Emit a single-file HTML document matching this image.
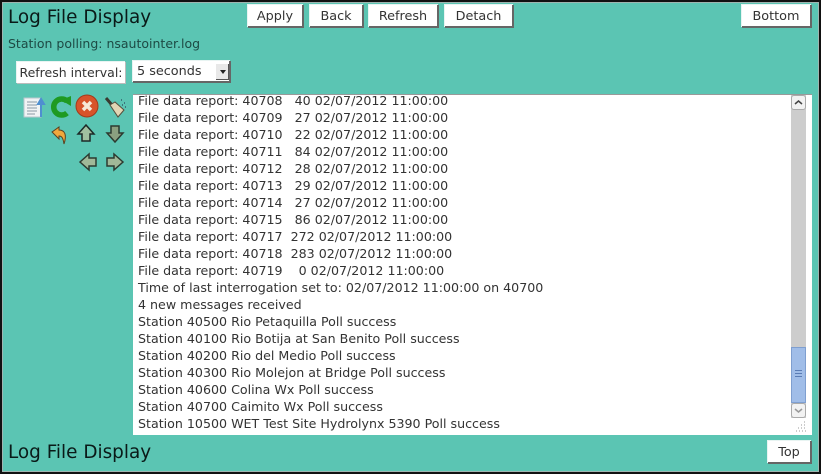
<!DOCTYPE html>
<html><head><meta charset="utf-8"><style>
html,body{margin:0;padding:0;width:821px;height:474px;overflow:hidden;background:#5bc5b3}
body{position:relative;font-family:"DejaVu Sans",sans-serif;color:#333}
.wrap{position:absolute;left:0;top:0;width:821px;height:474px;filter:blur(.35px)}
.frame{position:absolute;left:0;top:0;width:821px;height:474px;box-sizing:border-box;border:2px solid #111;box-shadow:inset 0 0 0 1px #9fb5b0}
.a{position:absolute;white-space:pre}
.h{font-size:18.4px;color:#0a1a18;line-height:24px}
.b{position:absolute;background:#fff;box-sizing:border-box;border-right:2px solid #666;border-bottom:2px solid #666;box-shadow:-1px -1px 0 #e8f4f2;font-size:12.8px;line-height:23px;text-align:center;color:#333}
.ta{position:absolute;left:133px;top:94px;width:679px;height:341px;background:#fff;border-top:1px solid #999;box-sizing:border-box;overflow:hidden}
.ln{position:absolute;left:5px;font-size:12.64px;line-height:17px;white-space:pre;color:#333}
svg{position:absolute;overflow:visible}
</style></head><body><div class="wrap">
<div class="frame"></div>
<div class="a h" style="left:8px;top:6px">Log File Display</div>
<div class="b" style="left:248px;top:5px;width:56px;height:23px">Apply</div>
<div class="b" style="left:310px;top:5px;width:54px;height:23px">Back</div>
<div class="b" style="left:369px;top:5px;width:70px;height:23px">Refresh</div>
<div class="b" style="left:445px;top:5px;width:69px;height:23px">Detach</div>
<div class="b" style="left:742px;top:5px;width:70px;height:23px">Bottom</div>
<div class="a" style="left:8px;top:36px;font-size:12.5px;line-height:16px;color:#1d4a44">Station polling: nsautointer.log</div>
<div class="b" style="left:17px;top:62px;width:109px;height:22px;border-right:1px solid #bbb;border-bottom:1px solid #bbb;font-size:12.5px;line-height:21px">Refresh interval:</div>
<div class="b" style="left:133px;top:61px;width:98px;height:22px;text-align:left;padding-left:4px;line-height:21px">5 seconds</div>
<div style="position:absolute;left:216px;top:64px;width:13px;height:16px;background:#e8e8e8;border-right:1px solid #555;border-bottom:1px solid #555;box-sizing:border-box"></div>
<div style="position:absolute;left:220px;top:70px;width:0;height:0;border-left:3px solid transparent;border-right:3px solid transparent;border-top:4px solid #222"></div>

<svg style="left:0;top:0" width="133" height="180" viewBox="0 0 133 180">
<rect x="24" y="98" width="17" height="19" fill="#f0f3f4" stroke="#b9c6cc"/>
<path d="M27 102h10M27 105h10M27 108h10M27 111h10M27 114h8" stroke="#8a9aa5"/>
<path d="M41 117v-14M38 104l3-5 3 5z" stroke="#4f8fd0" stroke-width="2" fill="#4f8fd0"/>
<path d="M67 101a8 8 0 1 0 0 12" fill="none" stroke="#1f9a22" stroke-width="5.500"/>
<path d="M61 100l10-4v10z" fill="#1f9a22"/>
<circle cx="87" cy="106" r="11" fill="#d8532a" stroke="#a33a1a"/>
<path d="M83 102l8 8M91 102l-8 8" stroke="#f7e8d8" stroke-width="3.500"/>
<path d="M106 98l6 7" stroke="#3a3a30" stroke-width="3"/>
<path d="M110 105l5-3 9 8-6 7z" fill="#e2d6b4" stroke="#554e3c"/>
<path d="M121 100h1M124 103h1M122 105h1M125 107h1" stroke="#224"/>
<path d="M52 132l7-5v3c6 0 8 5 5 14-1-6-2-8-5-8v3z" fill="#f0a83c" stroke="#5a4020"/>
<path d="M86 125l8 9h-4v7h-8v-7h-4z" fill="#a0c0a0" stroke="#1c2a28" stroke-width="1.500"/>
<path d="M115 142l8-9h-4v-7h-8v7h-4z" fill="#8aa080" stroke="#2c3a30" stroke-width="1.500"/>
<path d="M80 162l9-8v4h7v8h-7v4z" fill="#a0b898" stroke="#2c3a30" stroke-width="1.500"/>
<path d="M123 162l-9-8v4h-7v8h7v4z" fill="#a0b898" stroke="#2c3a30" stroke-width="1.500"/>
</svg>

<div class="ta">
<div class="ln" style="top:-3px">File data report: 40708   40 02/07/2012 11:00:00
File data report: 40709   27 02/07/2012 11:00:00
File data report: 40710   22 02/07/2012 11:00:00
File data report: 40711   84 02/07/2012 11:00:00
File data report: 40712   28 02/07/2012 11:00:00
File data report: 40713   29 02/07/2012 11:00:00
File data report: 40714   27 02/07/2012 11:00:00
File data report: 40715   86 02/07/2012 11:00:00
File data report: 40717  272 02/07/2012 11:00:00
File data report: 40718  283 02/07/2012 11:00:00
File data report: 40719    0 02/07/2012 11:00:00
Time of last interrogation set to: 02/07/2012 11:00:00 on 40700
4 new messages received
Station 40500 Rio Petaquilla Poll success
Station 40100 Rio Botija at San Benito Poll success
Station 40200 Rio del Medio Poll success
Station 40300 Rio Molejon at Bridge Poll success
Station 40600 Colina Wx Poll success
Station 40700 Caimito Wx Poll success
Station 10500 WET Test Site Hydrolynx 5390 Poll success</div>
<div style="position:absolute;left:658px;top:0;width:15px;height:323px;background:#cdcdcd"></div>
<div style="position:absolute;left:658px;top:0;width:15px;height:15px;background:#f2f2f2;border:1px solid #aaa;border-radius:3px;box-sizing:border-box"></div>
<svg style="left:658px;top:0" width="15" height="15"><path d="M4 9l3.500-3 3.500 3" fill="none" stroke="#444" stroke-width="1.500"/></svg>
<div style="position:absolute;left:658px;top:252px;width:15px;height:56px;background:#a0bde8;border:1px solid #7f9fd0;box-sizing:border-box"></div>
<svg style="left:658px;top:274px" width="15" height="10"><path d="M4 1.500h7M4 4.500h7M4 7.500h7" stroke="#5a7cb5"/></svg>
<div style="position:absolute;left:658px;top:308px;width:15px;height:15px;background:#f2f2f2;border:1px solid #aaa;border-radius:3px;box-sizing:border-box"></div>
<svg style="left:658px;top:308px" width="15" height="15"><path d="M4 6l3.500 3 3.500-3" fill="none" stroke="#999" stroke-width="1.500"/></svg>
<svg style="left:662px;top:326px" width="12" height="11"><path d="M9 1h1M6 4h1M9 4h1M3 7h1M6 7h1M9 7h1M1 10h1M4 10h1M7 10h1M10 10h1" stroke="#999"/></svg>
</div>

<div class="a h" style="left:8px;top:441px">Log File Display</div>
<div class="b" style="left:768px;top:441px;width:44px;height:23px">Top</div>
</div></body></html>
